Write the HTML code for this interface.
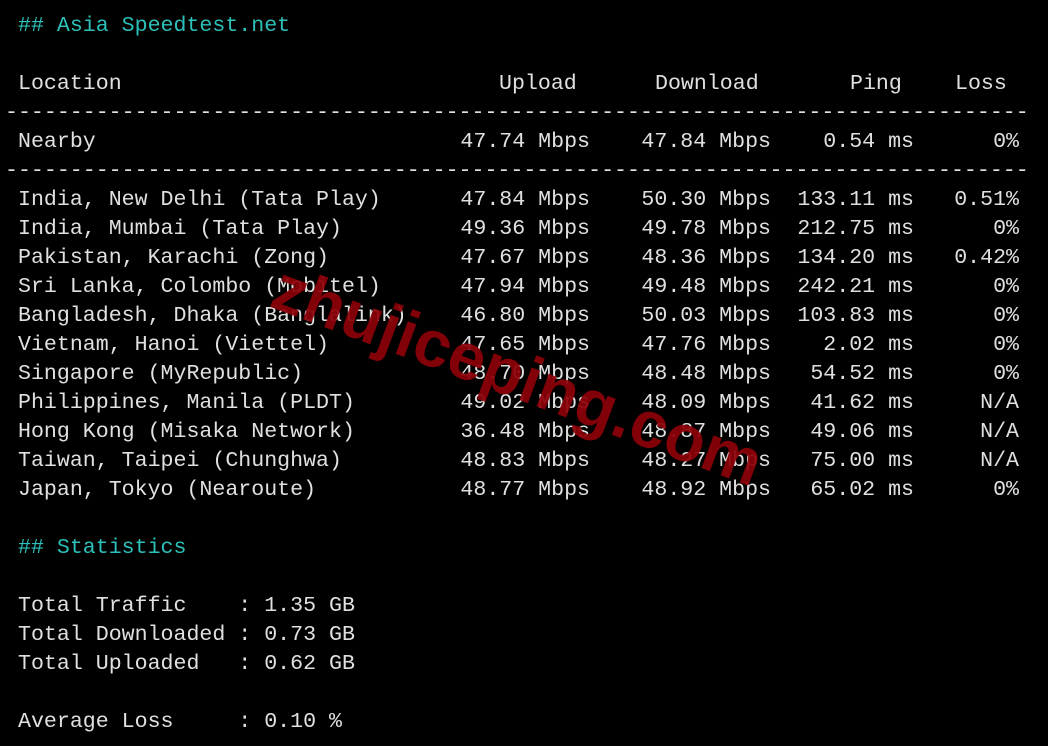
<!DOCTYPE html>
<html><head><meta charset="utf-8"><style>
html,body{margin:0;padding:0;background:#000;width:1048px;height:746px;overflow:hidden;}
.t{position:absolute;left:0;top:0;width:1048px;height:746px;overflow:hidden;font-family:"Liberation Mono",monospace;font-size:21.6px;color:#e0e0e0;}
.r{position:absolute;height:29px;line-height:29px;white-space:pre;}
.c{color:#2cc1ba;}
.wm{position:absolute;left:518px;top:375px;transform:translate(-50%,-50%) rotate(20.5deg);font-family:"Liberation Sans",sans-serif;font-weight:bold;font-size:66px;color:#8e0008;opacity:.92;white-space:nowrap;letter-spacing:0px;}
</style></head><body>
<div class="t" id="t"></div>
<div class="wm">zhujiceping.com</div>
<script>
var t=document.getElementById('t');
function add(i,html,x,right){var d=document.createElement('div');d.className='r';d.style.top=(11.5+29*i)+'px';if(right){d.style.right=(1048-x)+'px';}else{d.style.left=x+'px';}d.innerHTML=html;t.appendChild(d);}
add(0,'<span class="c">## Asia Speedtest.net</span>',18);
add(2,'Location',18);add(2,'Upload',499);add(2,'Download',655);add(2,'Ping',850);add(2,'Loss',955);
var dash='-'.repeat(79);
add(3,dash,5);add(5,dash,5);
var data=[
[4,'Nearby','47.74 Mbps','47.84 Mbps','0.54 ms','0%'],
[6,'India, New Delhi (Tata Play)','47.84 Mbps','50.30 Mbps','133.11 ms','0.51%'],
[7,'India, Mumbai (Tata Play)','49.36 Mbps','49.78 Mbps','212.75 ms','0%'],
[8,'Pakistan, Karachi (Zong)','47.67 Mbps','48.36 Mbps','134.20 ms','0.42%'],
[9,'Sri Lanka, Colombo (Mobitel)','47.94 Mbps','49.48 Mbps','242.21 ms','0%'],
[10,'Bangladesh, Dhaka (Banglalink)','46.80 Mbps','50.03 Mbps','103.83 ms','0%'],
[11,'Vietnam, Hanoi (Viettel)','47.65 Mbps','47.76 Mbps','2.02 ms','0%'],
[12,'Singapore (MyRepublic)','48.70 Mbps','48.48 Mbps','54.52 ms','0%'],
[13,'Philippines, Manila (PLDT)','49.02 Mbps','48.09 Mbps','41.62 ms','N/A'],
[14,'Hong Kong (Misaka Network)','36.48 Mbps','48.87 Mbps','49.06 ms','N/A'],
[15,'Taiwan, Taipei (Chunghwa)','48.83 Mbps','48.27 Mbps','75.00 ms','N/A'],
[16,'Japan, Tokyo (Nearoute)','48.77 Mbps','48.92 Mbps','65.02 ms','0%']];
data.forEach(function(r){add(r[0],r[1],18);add(r[0],r[2],590,1);add(r[0],r[3],771,1);add(r[0],r[4],914,1);add(r[0],r[5],1019,1);});
add(18,'<span class="c">## Statistics</span>',18);
add(20,'Total Traffic    : 1.35 GB',18);
add(21,'Total Downloaded : 0.73 GB',18);
add(22,'Total Uploaded   : 0.62 GB',18);
add(24,'Average Loss     : 0.10 %',18);
</script>
</body></html>
